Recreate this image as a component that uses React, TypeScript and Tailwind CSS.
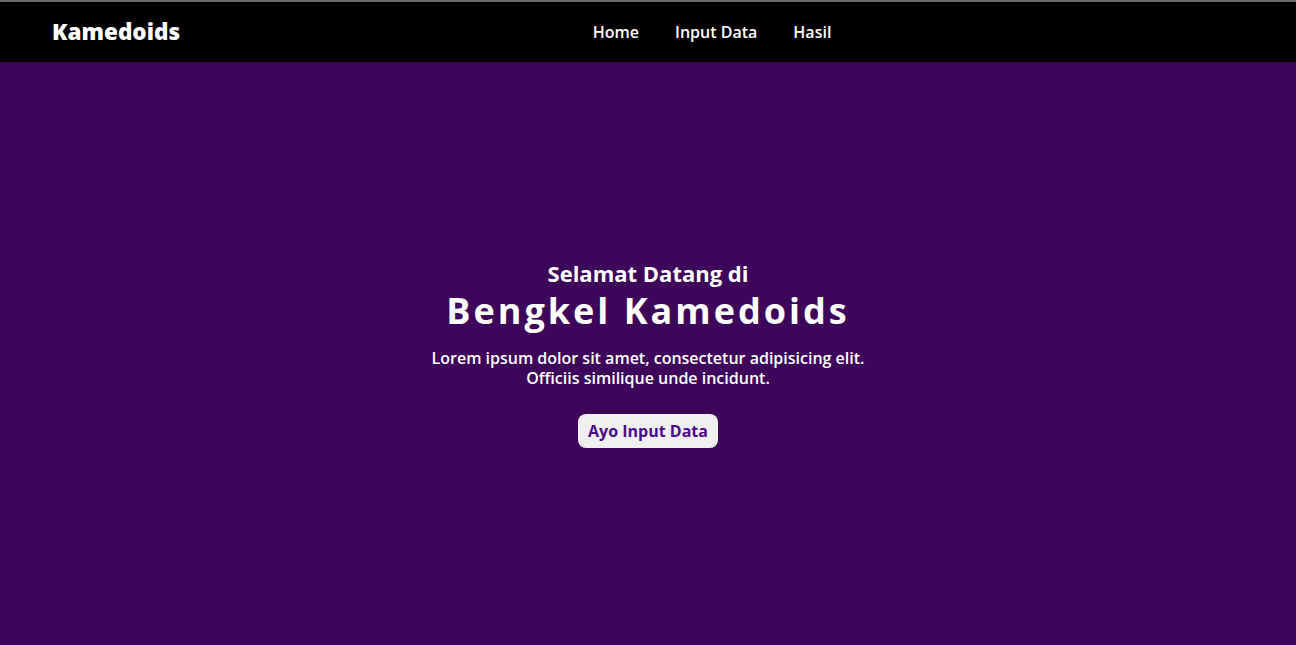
import React from 'react';

const App = () => {
  return (
    <div className="min-h-screen flex flex-col bg-[#3d065a] font-['Open_Sans',sans-serif] text-white">
      <nav className="h-[62px] border-t-2 border-[#6b6b6b] bg-black px-[52px] flex items-center justify-between">
        <a href="#" className="text-[22.5px] font-extrabold">Kamedoids</a>
        <ul className="flex items-center gap-9 text-[16px] font-semibold">
          <li><a href="#">Home</a></li>
          <li><a href="#">Input Data</a></li>
          <li><a href="#">Hasil</a></li>
        </ul>
        <div></div>
      </nav>

      {/* Hero */}
      <section className="flex-1 flex flex-col items-center justify-center text-center">
        <h3 className="text-[22px] font-bold leading-[28px]">Selamat Datang di</h3>
        <h1 className="mt-[2px] text-[36px] font-bold tracking-[3px] leading-[44px]">Bengkel Kamedoids</h1>
        <p className="mt-[15px] text-[16px] font-semibold leading-[20px]">
          Lorem ipsum dolor sit amet, consectetur adipisicing elit.
          <br />
          Officiis similique unde incidunt.
        </p>
        <button className="mt-[26px] h-[34px] px-[10px] rounded-lg bg-[#f0f0f0] text-[#4a0a8a] text-[16px] font-bold">
          Ayo Input Data
        </button>
      </section>
    </div>
  );
};

export default App;
